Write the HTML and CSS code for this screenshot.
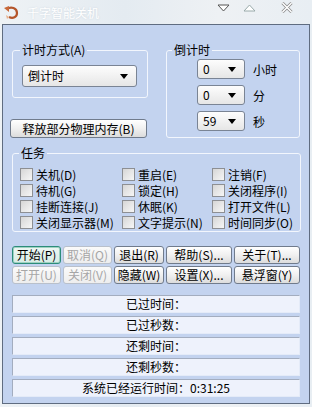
FILE: index.html
```html
<!DOCTYPE html>
<html lang="zh-CN">
<head>
    <meta charset="UTF-8">
    <title>千字智能关机</title>
    <link rel="stylesheet" href="styles.css">
</head>
<body>
    <div class="titlebar">
        <svg class="app-icon" width="16" height="16" viewBox="0 0 16 16">
            <path d="M4 4 C8 1, 14 3, 14 8 C14 12, 10 14, 6 12" fill="none" stroke="#b4552b" stroke-width="2.2"/>
            <path d="M1 3 L6 1 L6 7 Z" fill="#c8693a"/>
            <path d="M6 12 L3 10 L4 14 Z" fill="#e9b08a"/>
        </svg>
        <span class="title">千字智能关机</span>
        <div class="caption-btns">
            <svg width="13" height="8" viewBox="0 0 13 8"><path d="M1 1 L12 1 L6.5 7 Z" fill="#fff" stroke="#555" stroke-width="1"/></svg>
            <svg width="13" height="8" viewBox="0 0 13 8"><path d="M1 7 L12 7 L6.5 1 Z" fill="#fff" stroke="#9aa" stroke-width="1"/></svg>
            <svg width="12" height="11" viewBox="0 0 12 11"><path d="M1.5 1 L10.5 10 M10.5 1 L1.5 10" stroke="#8a8a8a" stroke-width="3"/><path d="M1.5 1 L10.5 10 M10.5 1 L1.5 10" stroke="#fff" stroke-width="1.5"/></svg>
        </div>
    </div>

    <div class="window">
        <div class="top">
            <div class="left-col">
                <fieldset class="group group-mode">
                    <legend>计时方式(A)</legend>
                    <div class="select select-wide">倒计时<span class="arrow"></span></div>
                </fieldset>
                <button class="btn btn-release">释放部分物理内存(B)</button>
            </div>
            <fieldset class="group group-count">
                <legend>倒计时</legend>
                <div class="spin-row"><div class="select select-small">0<span class="arrow"></span></div><span>小时</span></div>
                <div class="spin-row"><div class="select select-small">0<span class="arrow"></span></div><span>分</span></div>
                <div class="spin-row"><div class="select select-small">59<span class="arrow"></span></div><span>秒</span></div>
            </fieldset>
        </div>

        <fieldset class="group group-tasks">
            <legend>任务</legend>
            <div class="task-grid">
                <label class="task"><span class="check"></span>关机(D)</label>
                <label class="task"><span class="check"></span>重启(E)</label>
                <label class="task"><span class="check"></span>注销(F)</label>
                <label class="task"><span class="check"></span>待机(G)</label>
                <label class="task"><span class="check"></span>锁定(H)</label>
                <label class="task"><span class="check"></span>关闭程序(I)</label>
                <label class="task"><span class="check"></span>挂断连接(J)</label>
                <label class="task"><span class="check"></span>休眠(K)</label>
                <label class="task"><span class="check"></span>打开文件(L)</label>
                <label class="task"><span class="check"></span>关闭显示器(M)</label>
                <label class="task"><span class="check"></span>文字提示(N)</label>
                <label class="task"><span class="check"></span>时间同步(O)</label>
            </div>
        </fieldset>

        <div class="btn-grid">
            <button class="btn btn-default">开始(P)</button>
            <button class="btn" disabled>取消(Q)</button>
            <button class="btn">退出(R)</button>
            <button class="btn">帮助(S)...</button>
            <button class="btn">关于(T)...</button>
            <button class="btn" disabled>打开(U)</button>
            <button class="btn" disabled>关闭(V)</button>
            <button class="btn">隐藏(W)</button>
            <button class="btn">设置(X)...</button>
            <button class="btn">悬浮窗(Y)</button>
        </div>

        <div class="status-list">
            <div class="status">已过时间：</div>
            <div class="status">已过秒数：</div>
            <div class="status">还剩时间：</div>
            <div class="status">还剩秒数：</div>
            <div class="status">系统已经运行时间：0:31:25</div>
        </div>
    </div>
</body>
</html>
```

FILE: styles.css
```css
body {
    margin: 0;
    width: 312px;
    height: 407px;
    overflow: hidden;
    background: linear-gradient(90deg, #eef2f5, #e4ebf1 40%, #eef1f4 70%, #e8eef3);
    font-family: "Noto Sans CJK SC", "Liberation Sans", sans-serif;
    font-size: 12px;
    color: #000;
}
.titlebar {
    height: 24px;
    display: flex;
    align-items: center;
}
.app-icon {
    margin-left: 3px;
    margin-top: 1px;
}
.title {
    margin-left: 8px;
    color: #fff;
    font-size: 12px;
    text-shadow: 0 0 2px #c9d3dc;
}
.caption-btns {
    margin-left: auto;
    margin-right: 19px;
    display: flex;
    align-items: center;
    gap: 13px;
    margin-top: -9px;
}
.caption-btns svg:last-child {
    margin-left: 12px;
}
.window {
    margin: 0 2px;
    height: 380px;
    box-sizing: border-box;
    border: 1px solid #5f6c80;
    background: #c3d3ef;
    padding: 18px 9px 0 7px;
}
.top {
    display: flex;
    gap: 19px;
}
.left-col {
    width: 137px;
}
.group {
    margin: 0;
    border: 1px solid #f2f6fd;
    border-radius: 3px;
    box-sizing: border-box;
    min-width: 0;
}
.group legend {
    padding: 0 2px;
    line-height: 14px;
    font-size: 12px;
}
.group-mode {
    margin-left: 2px;
    width: 136px;
    height: 55px;
    padding: 8px 10px 0 9px;
}
.group-mode legend {
    margin-left: -2px;
}
.group-count {
    width: 135px;
    height: 95px;
    padding: 2px 0 0 30px;
}
.group-count legend {
    margin-left: -25px;
}
.select {
    position: relative;
    box-sizing: border-box;
    border: 1px solid #7a8494;
    border-radius: 3px;
    background: linear-gradient(#fdfdfd, #e6e6e6);
    padding-left: 5px;
}
.select-wide {
    width: 115px;
    height: 22px;
    line-height: 20px;
}
.select-small {
    width: 48px;
    height: 20px;
    line-height: 18px;
}
.arrow {
    position: absolute;
    right: 8px;
    top: 50%;
    margin-top: -2px;
    border-left: 4px solid transparent;
    border-right: 4px solid transparent;
    border-top: 5px solid #000;
}
.spin-row {
    display: flex;
    align-items: center;
    gap: 8px;
    margin-bottom: 6px;
}
.btn {
    font-family: inherit;
    font-size: 12px;
    color: #000;
    box-sizing: border-box;
    height: 18px;
    padding: 0;
    border: 1px solid #707b8c;
    border-radius: 3px;
    background: linear-gradient(#ffffff, #f0f0f0 50%, #dcdcdc);
    line-height: 16px;
}
.btn:disabled {
    color: #a6a6a6;
    border-color: #b9c0cb;
    background: linear-gradient(#fafafa, #eeeeee);
}
.btn-default {
    border-color: #2c8c7a;
    background: linear-gradient(#eef7f3, #d8ece5);
    box-shadow: inset 0 0 0 1px #9fd2c2;
}
.btn-release {
    width: 137px;
    height: 19px;
    margin-top: 21px;
}
.group-tasks {
    margin: 8px 0 0 2px;
    width: 289px;
    height: 86px;
    padding: 6px 0 0 7px;
}
.group-tasks legend {
    margin-left: -1px;
}
.task-grid {
    display: grid;
    grid-template-columns: 102px 90px 1fr;
    grid-auto-rows: 16px;
}
.task {
    display: flex;
    align-items: center;
    gap: 3px;
    white-space: nowrap;
}
.check {
    width: 13px;
    height: 13px;
    box-sizing: border-box;
    border: 1px solid #8d8f93;
    background: linear-gradient(135deg, #d6d6d6, #f6f6f6);
}
.btn-grid {
    margin: 14px 0 0 2px;
    display: grid;
    grid-template-columns: 49px 49px 50px 66px 66px;
    grid-auto-rows: 18px;
    column-gap: 2px;
    row-gap: 2px;
}
.status-list {
    margin: 11px 0 0 2px;
    width: 288px;
    display: flex;
    flex-direction: column;
    gap: 3px;
}
.status {
    height: 18px;
    box-sizing: border-box;
    background: #eef2fc;
    border: 1px solid;
    border-color: #a3adbf #e4ebf8 #e4ebf8 #a3adbf;
    text-align: center;
    line-height: 16px;
}
```
